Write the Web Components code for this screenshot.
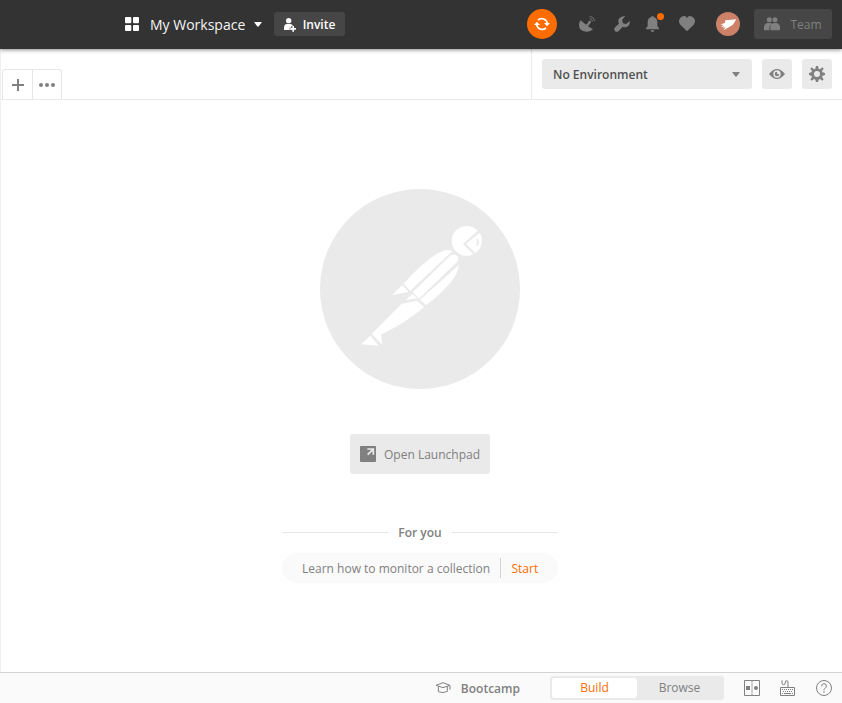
<!DOCTYPE html>
<html lang="en">
<head>
<meta charset="utf-8">
<title>My Workspace</title>
<style>
html,body{margin:0;height:100%;overflow:hidden}
body{font:12px/20px "Open Sans","Noto Sans",sans-serif;color:#808080;background:#fff}
</style>
</head>
<body>
<workspace-app></workspace-app>
<script>
const ICONS = {
  grid: [42,42,'<rect width="19" height="19" rx="3"/><rect x="24" width="18" height="19" rx="3"/><rect y="24" width="19" height="18" rx="3"/><rect x="24" y="24" width="18" height="18" rx="3"/>'],
  caret: [8,5,'<path d="M0 0h8L4.600 4.500h-1.200z"/>'],
  invite: [36,42,'<circle cx="14" cy="8" r="8"/><path d="M0 36V29Q0 19 9 18h10q5 0 8 5v1h-5v5h-5v6h5v1zM25 24h5v6h6v5h-6v6h-5v-6h-6v-5h6z"/>'],
  sync: [48,48,'<path d="M12 12A17 17 0 0 1 40 23M36 36A17 17 0 0 1 8 25" fill="none" stroke="currentColor" stroke-width="5"/><path d="M30 21h18L39 31zM0 27h18L9 17z"/>'],
  dish: [48,48,'<path d="M5 13L21 26 30 17 34 21 27 31 42 40Q33 48 22 47Q0 45 0 26Q0 18 5 13z"/><circle cx="32" cy="18" r="4"/><path d="M32 8q8 0 8 8M32 2q14 0 14 14" fill="none" stroke="currentColor" stroke-width="2.500"/>'],
  wrench: [48,48,'<path d="M34 1L25 10V19L30 23H38L47 14Q49 30 37 33Q31 35 26 32L15 44Q8 51 2 44Q-2 38 4 33L15 23Q10 13 17 6Q24-1 34 1z"/>'],
  bell: [39,48,'<path d="M16 3Q16 0 19.500 0T23 3Q34 6 34 19V28Q34 34 39 36V40H0V36Q5 34 5 28V19Q5 6 16 3zM14 43h11q0 5-5.500 5T14 43z"/>'],
  heart: [48,46,'<path d="M24 46L4 26Q-3 17 2 8T16 0Q22 0 24 6Q27 0 33 0Q41 0 46 8T44 26z"/>'],
  avatar: [72,72,'<circle cx="36" cy="36" r="36" fill="#cd8168"/><path fill="#fff" d="M28 25L61 22 50 39 23 55 29 46 19 50 26 43 15 45 22 38 13 38 27 32z"/>'],
  team: [48,40,'<circle cx="16" cy="8" r="7.500"/><circle cx="33" cy="8" r="7.500"/><path d="M0 40V30Q1 19 12 18H18Q22 18 24 20Q17 25 16 33V40zM19 40V31Q21 19 30 18H36Q46 19 48 30V40z"/>'],
  plus: [36,36,'<path d="M15 0h6v15h15v6H21v15h-6V21H0v-6h15z"/>'],
  dots: [48,12,'<circle cx="6" cy="6" r="6"/><circle cx="24" cy="6" r="6"/><circle cx="42" cy="6" r="6"/>'],
  eye: [48,30,'<path fill-rule="evenodd" d="M0 15Q24-15 48 15Q24 45 0 15zM24 4a11 11 0 1 0 0 22a11 11 0 1 0 0-22z"/><path d="M24 8L25 16 31 15A7 7 0 1 1 24 8z"/>'],
  gear: [48,48,'<path fill-rule="evenodd" d="M21 0h6l2 8 4 2 7-6 4 4-5 7 2 4 7 2v6l-7 2-2 4 5 7-4 4-7-5-4 2-2 7h-6l-2-7-4-2-7 5-4-4 5-7-2-4-7-2v-6l7-2 2-4-5-7 4-4 7 6 4-2zM24 15a9 9 0 1 0 0 18a9 9 0 1 0 0-18z"/>'],
  launch: [48,48,'<rect width="48" height="48" rx="3"/><path d="M22 9h18v17M39 10L23 26" fill="none" stroke="#eaeaea" stroke-width="5"/>'],
  cap: [48,34,'<path d="M3 10L24 2 45 10 24 17zM10 14V29Q24 35 37 28V14M45 11V23" fill="none" stroke="currentColor" stroke-width="3"/>'],
  panes: [48,48,'<path d="M1.500 1.500h45v45h-45z" fill="none" stroke="currentColor" stroke-width="3"/><path d="M24 2v44" stroke="currentColor" stroke-width="2"/><rect x="6" y="18" width="12" height="12"/><circle cx="36" cy="24" r="6"/>'],
  keyboard: [45,48,'<path d="M1.500 22.500h42v24h-42zM6 1v8q0 5 5 5t5-5V6q0-4 4-4t4 4v15" fill="none" stroke="currentColor" stroke-width="3"/><path d="M6 28.500h33M9 34.500h30" stroke="currentColor" stroke-width="3" stroke-dasharray="3 3"/><path d="M6 40.500h3m3 0h21m3 0h3" stroke="currentColor" stroke-width="3"/>'],
  help: [48,48,'<circle cx="24" cy="24" r="22.500" fill="none" stroke="currentColor" stroke-width="3"/><path d="M17 19q0-8 7-8t7 7q0 4-4 7t-3 6" fill="none" stroke="currentColor" stroke-width="3"/><rect x="22" y="34" width="4" height="4"/>'],
  astronaut: [600,600,'<circle cx="300" cy="300" r="300" fill="#eaeaea"/><g transform="translate(90 78)" fill="#fff"><path d="M383 47A45 45 0 1 0 370 118L339 87zM389 53L348 87 376 114A45 45 0 0 0 389 53z"/><path d="M380 72q9 9-1 20" fill="none" stroke="#eaeaea" stroke-width="5"/><path d="M161 206Q219 140 267 113Q291 99 307 109L181 227zM188 232L302 121Q315 114 324 125Q327 135 319 143L207 251zM210 254L326 150Q326 173 303 201Q270 240 228 271zM127 240L157 210 176 231zM167 255L187 237 202 250zM154 267L201 257 222 277Q167 324 93 359L97 389 65 357zM34 388L61 362 86 392z"/></g>']
};

class UiIcon extends HTMLElement {
  connectedCallback() {
    const [w,h,shape] = ICONS[this.getAttribute('name')];
    this.attachShadow({mode:'open'}).innerHTML = `<style>:host{display:block;flex:none;width:${w/3}px;height:${h/3}px}svg{display:block;width:100%;height:100%;overflow:visible;fill:currentColor}</style><svg viewBox="0 0 ${w} ${h}">${shape}</svg>`;
  }
}
customElements.define('ui-icon', UiIcon);

function define(name, css, html) {
  const t = document.createElement('template');
  t.innerHTML = `<style>*{box-sizing:border-box}:host{box-sizing:border-box}${css}</style>${html}`;
  customElements.define(name, class extends HTMLElement {
    constructor() {
      super();
      this.attachShadow({mode:'open'}).append(t.content.cloneNode(true));
    }
  });
}

define('ui-button', `:host{display:flex;align-items:center;justify-content:center;flex:none;border-radius:3px;background:#eaeaea;height:30px;white-space:nowrap}::slotted(span){padding-top:2px}`, `<slot></slot>`);

define('app-header', `
:host{display:flex;align-items:center;flex:none;height:49px;background:#333;color:#808080;box-shadow:0 1px 4px rgba(0,0,0,.45);padding:0 10px 1px 125px;position:relative;z-index:1}
.grid{width:14px;height:14px;color:#fff}
.title{font-size:14px;color:#f5f5f5;margin-left:11px;width:104px;white-space:nowrap;padding-top:2px}
.caret{width:8px;height:5px;color:#fff}
.invite{width:71px;height:24px;margin-left:12px;background:#464646;color:#fff;font-weight:600;gap:7px}
.invite ui-icon{margin-top:1px}
.right{margin-left:auto;display:flex;align-items:center}
.sync{display:grid;place-items:center;width:30px;height:30px;border-radius:50%;background:#ff6c00;color:#fff;margin-right:22px}
.bell{position:relative;margin:0 20px 0 16px}
.bell i{position:absolute;left:11px;top:-3px;width:7px;height:7px;border-radius:50%;background:#ff6c00}
.wrench{margin-left:19px}
.avatar{margin:0 14px 0 21px}
.team{width:78px;background:#464646;gap:10px}`,
`<ui-icon class="grid" name="grid"></ui-icon><span class="title">My Workspace</span><ui-icon class="caret" name="caret"></ui-icon>
<ui-button class="invite"><ui-icon name="invite"></ui-icon><span>Invite</span></ui-button>
<div class="right"><div class="sync"><ui-icon name="sync"></ui-icon></div><ui-icon name="dish"></ui-icon><ui-icon class="wrench" name="wrench"></ui-icon><div class="bell"><ui-icon name="bell"></ui-icon><i></i></div><ui-icon name="heart"></ui-icon><ui-icon class="avatar" name="avatar"></ui-icon><ui-button class="team"><ui-icon name="team"></ui-icon><span>Team</span></ui-button></div>`);

define('tab-bar', `
:host{display:flex;flex:none;height:51px;border-bottom:1px solid #eaeaea}
.tabs{display:flex;align-self:flex-end;height:30px;width:60px;margin-left:1px;border:1px solid #e6e6e6;border-bottom:0;border-radius:3px 3px 0 0}
.tab{flex:1;display:grid;place-items:center;padding-top:1px}
.tab:first-child{padding-left:1px}
.tab+.tab{border-left:1px solid #e6e6e6}
.env{margin-left:auto;width:311px;border-left:1px solid #eaeaea;padding:0 10px;display:flex;align-items:center;gap:10px}
.select{width:210px;justify-content:space-between;padding:0 12px 0 11px;color:#505050;font-weight:600}
.select ui-icon{width:8px;height:5px;color:#808080}
.square{width:30px}`,
`<div class="tabs"><div class="tab"><ui-icon name="plus"></ui-icon></div><div class="tab"><ui-icon name="dots"></ui-icon></div></div>
<div class="env"><ui-button class="select"><span>No Environment</span><ui-icon name="caret"></ui-icon></ui-button><ui-button class="square"><ui-icon name="eye"></ui-icon></ui-button><ui-button class="square"><ui-icon name="gear"></ui-icon></ui-button></div>`);

define('lesson-pill', `
:host{display:flex;align-items:center;width:276px;height:30px;border-radius:15px;background:#fafafa;padding:0 0 0 20px;white-space:nowrap}
.text{width:188px;padding-top:2px}
.start{display:flex;align-items:center;height:20px;padding-top:2px;margin-left:10px;padding-left:10.500px;border-left:1px solid #d4d4d4;color:#ff6c00}`,
`<span class="text"><slot></slot></span><span class="start">Start</span>`);

define('empty-state', `
:host{display:flex;flex-direction:column;align-items:center;flex:1;padding:89px 3px 0 0}
.launch{width:140px;height:40px;margin-top:45px;gap:8px}
.divider{display:flex;align-items:center;gap:10px;width:276px;height:20px;margin:48px 0 11px;font-weight:600}
.divider span{padding-top:2px}
.divider::before,.divider::after{content:"";height:1px;flex:1;background:#e6e6e6}`,
`<ui-icon name="astronaut"></ui-icon><ui-button class="launch"><ui-icon name="launch"></ui-icon><span>Open Launchpad</span></ui-button><div class="divider"><span>For you</span></div><lesson-pill>Learn how to monitor a collection</lesson-pill>`);

define('status-bar', `
:host{display:flex;align-items:center;justify-content:flex-end;flex:none;height:31px;border-top:1px solid #d4d4d4;background:#fafafa;padding-right:10px}
.boot{font-weight:600;margin:0 30px 0 10px;padding-top:1px}
.toggle{display:flex;width:174px;height:24px;padding:2px;border-radius:3px;background:#eaeaea;text-align:center;margin-right:20px}
.toggle span{flex:1;height:20px;line-height:19px}
.toggle .on{background:#fff;color:#ff6c00;border-radius:3px}
.tools{display:flex;align-items:center}
.tools ui-icon+ui-icon{margin-left:20px}
.tools ui-icon:last-child{margin-left:21px}`,
`<ui-icon name="cap"></ui-icon><span class="boot">Bootcamp</span><div class="toggle"><span class="on">Build</span><span>Browse</span></div><div class="tools"><ui-icon name="panes"></ui-icon><ui-icon name="keyboard"></ui-icon><ui-icon name="help"></ui-icon></div>`);

define('workspace-app', `
:host{display:flex;flex-direction:column;width:100%;height:100vh}
main{display:flex;flex-direction:column;flex:1;border-left:1px solid #f0f0f0}`,
`<app-header></app-header><main><tab-bar></tab-bar><empty-state></empty-state></main><status-bar></status-bar>`);
</script>
</body>
</html>
